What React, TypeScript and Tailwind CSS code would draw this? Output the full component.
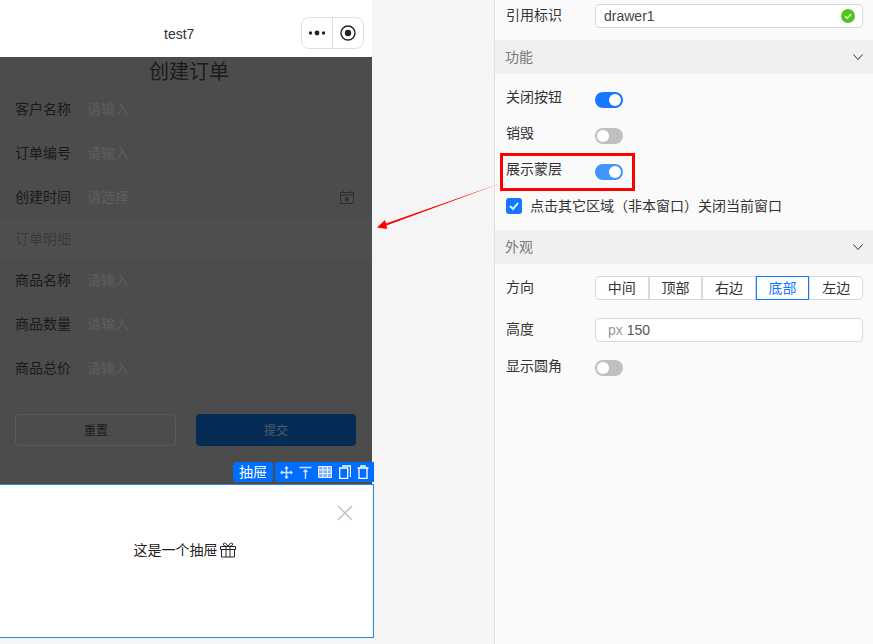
const cjk = { fontFamily: '"Liberation Sans", "Noto Sans CJK SC", sans-serif' };

function Toggle({ on, dim }: { on?: boolean; dim?: boolean }) {
  const bg = on ? (dim ? "bg-[#4096ff]" : "bg-[#1677ff]") : "bg-[#bfbfbf]";
  return (
    <span className={`flex h-4 w-7 items-center rounded-full p-0.5 ${bg} ${on ? "justify-end" : "justify-start"}`}>
      <span className="h-3 w-3 rounded-full bg-white" />
    </span>
  );
}

function Chevron() {
  return (
    <svg width="12" height="12" viewBox="0 0 12 12" fill="none" stroke="#333" strokeWidth="1">
      <path d="M1.5 3.5 6 8.5l4.5-5" />
    </svg>
  );
}

function FormRow({ label, hint, last, icon }: { label: string; hint: string; last?: boolean; icon?: boolean }) {
  return (
    <div className="px-[15px]">
      <div className={`flex h-11 items-center justify-between ${last ? "" : "border-b border-[#494949]"}`}>
        <div className="flex items-center text-sm">
          <span className="w-[72px] text-[#1a1a1a]">{label}</span>
          <span className="text-[#5e5e5e]">{hint}</span>
        </div>
        {icon && (
          <svg className="mr-[3px]" width="14" height="14" viewBox="0 0 14 14" fill="none" stroke="#2f2f2f" strokeWidth="1">
            <path d="M.5 2.500h13v11H.5zM.5 5h13M3.500 .5v2M10.500 .5v2" />
            <rect x="5" y="7.500" width="3.500" height="3.500" fill="#2f2f2f" stroke="none" />
          </svg>
        )}
      </div>
    </div>
  );
}

function PanelRow({ label, children, h, lift }: { label: string; children: React.ReactNode; h: string; lift: string }) {
  return (
    <div className={`flex items-center pl-[11px] ${h}`}>
      <span className={`w-[89px] text-sm text-[#333] ${lift}`}>{label}</span>
      {children}
    </div>
  );
}

function SectionHead({ title }: { title: string }) {
  return (
    <div className="flex h-[34px] items-center justify-between bg-[#f0f0f0] pl-2.5 pr-[9px]">
      <span className="text-sm text-[#777]">{title}</span>
      <Chevron />
    </div>
  );
}

function Seg({ text, active }: { text: string; active?: boolean }) {
  return (
    <span
      className={`flex h-6 flex-1 items-center justify-center border bg-white text-sm first:rounded-l last:rounded-r ${
        active ? "border-[#1677ff] text-[#1677ff]" : "border-[#d9d9d9] text-[#333]"
      }`}
    >
      {text}
    </span>
  );
}

function Phone() {
  return (
    <div className="flex h-[644px] w-[372px] shrink-0 flex-col bg-[#f5f5f5]">
      <div className="flex h-[57px] items-center bg-white">
        <span className="flex-1 pl-[164px] pt-[11px] text-sm text-[#333]">test7</span>
        <div className="mr-2 mt-2 flex h-8 w-[63px] items-center rounded-lg border border-[#e0e0e0]">
          <span className="flex h-full w-[31px] items-center justify-center border-r border-[#e0e0e0]">
            <svg width="18" height="6" viewBox="0 0 18 6" fill="#222">
              <circle cx="2.500" cy="3" r="1.700" />
              <circle cx="9" cy="3" r="2.400" />
              <circle cx="15.500" cy="3" r="1.700" />
            </svg>
          </span>
          <span className="flex flex-1 items-center justify-center">
            <svg width="16" height="16" viewBox="0 0 16 16">
              <circle cx="8" cy="8" r="7" fill="none" stroke="#222" strokeWidth="1.400" />
              <circle cx="8" cy="8" r="3.200" fill="#222" />
            </svg>
          </span>
        </div>
      </div>
      <div className="h-[427px] bg-[#4c4c4c]">
        <div className="flex h-[30px] items-center justify-center pl-1.5 text-xl text-[#1a1a1a]">创建订单</div>
        <FormRow label="客户名称" hint="请输入" />
        <FormRow label="订单编号" hint="请输入" />
        <FormRow label="创建时间" hint="请选择" icon last />
        <div className="flex h-[39px] items-center bg-[#4f4f4f] px-[15px] text-sm text-[#3a3a3a]">订单明细</div>
        <FormRow label="商品名称" hint="请输入" />
        <FormRow label="商品数量" hint="请输入" />
        <FormRow label="商品总价" hint="请输入" last />
        <div className="mt-6 flex gap-5 px-[15px]">
          <span className="flex h-8 w-[161px] items-center justify-center rounded border border-[#5a5a5a] pl-px pt-0.5 text-xs text-[#1a1a1a]">重置</span>
          <span className="flex h-8 w-40 items-center justify-center rounded bg-[#052c55] pt-0.5 text-xs text-[#4c5c6c]">提交</span>
        </div>
      </div>
      <div className="h-[154px] bg-white">
        <div className="flex justify-end pr-[18px] pt-5">
          <svg width="18" height="18" viewBox="0 0 18 18" stroke="#c4c4c4" strokeWidth="1.600">
            <path d="M2 2l14 14M16 2 2 16" />
          </svg>
        </div>
        <div className="mt-[18px] flex items-center justify-center gap-0.5 pr-[3px] text-sm text-[#222]">
          这是一个抽屉
          <svg width="16" height="16" viewBox="0 0 16 16" fill="none" stroke="#222" strokeWidth="1">
            <path d="M.5 4.500h15v3H.5zM1.500 7.500v7.500h13V7.500M6 4.500V15M10 4.500V15M8 4.500C6.500 .5 2.500 .2 3.500 3c.3 1 2.500 1.500 4.500 1.500s4.200-.5 4.500-1.500c1-2.800-3-2.500-4.500 1.500z" />
          </svg>
        </div>
      </div>
    </div>
  );
}

function Panel() {
  return (
    <div className="h-[644px] flex-1 border-l border-[#e0e0e0] bg-[#fafafa]">
      <PanelRow label="引用标识" h="h-10 pb-2" lift="-translate-y-px">
        <div className="flex h-6 w-[268px] items-center justify-between rounded border border-[#d9d9d9] bg-white pl-2 pr-[7px] text-sm text-[#444]">
          drawer1
          <svg width="14" height="14" viewBox="0 0 14 14">
            <circle cx="7" cy="7" r="7" fill="#52c41a" />
            <path d="M4 7.200 6.200 9.300 10 5.200" fill="none" stroke="#fff" strokeWidth="1.400" />
          </svg>
        </div>
      </PanelRow>
      <SectionHead title="功能" />
      <div className="pt-2">
        <PanelRow label="关闭按钮" h="h-9" lift="-translate-y-[3px]"><Toggle on /></PanelRow>
        <PanelRow label="销毁" h="h-9" lift="-translate-y-[3px]"><Toggle /></PanelRow>
        <PanelRow label="展示蒙层" h="h-9" lift="-translate-y-[3px]"><Toggle on dim /></PanelRow>
        <div className="flex h-[34px] -translate-y-px items-center gap-2 pl-[11px] text-sm text-[#333]">
          <span className="flex h-4 w-4 items-center justify-center rounded-[3px] bg-[#1677ff]">
            <svg width="12" height="12" viewBox="0 0 12 12" fill="none" stroke="#fff" strokeWidth="1.800">
              <path d="M2 6.200 5 9l5-6" />
            </svg>
          </span>
          点击其它区域（非本窗口）关闭当前窗口
        </div>
      </div>
      <div className="mt-1.5">
        <SectionHead title="外观" />
      </div>
      <div className="pt-3">
        <PanelRow label="方向" h="h-6" lift="-translate-y-px">
          <div className="flex w-[268px]">
            <Seg text="中间" />
            <Seg text="顶部" />
            <Seg text="右边" />
            <Seg text="底部" active />
            <Seg text="左边" />
          </div>
        </PanelRow>
        <div className="mt-[18px]">
          <PanelRow label="高度" h="h-6" lift="-translate-y-px">
            <div className="flex h-6 w-[268px] items-center rounded border border-[#d9d9d9] bg-white pl-3 text-sm text-[#555]">
              <span className="mr-1 text-[#999]">px</span>150
            </div>
          </PanelRow>
        </div>
        <div className="mt-2">
          <PanelRow label="显示圆角" h="h-9" lift="-translate-y-0.5"><Toggle /></PanelRow>
        </div>
      </div>
    </div>
  );
}

export default function App() {
  return (
    <div className="relative flex h-[644px] w-[873px] overflow-hidden bg-[#f5f5f5]" style={cjk}>
      <Phone />
      <div className="w-[122px] shrink-0" />
      <Panel />

      {/* selection toolbar over the drawer */}
      <div className="absolute left-[233px] top-[462px] flex h-5 items-center gap-0.5">
        <span className="flex h-5 w-10 items-center justify-center rounded bg-[#006dff] text-sm text-white">抽屉</span>
        <span className="flex h-5 w-[99px] items-center justify-around bg-[#006dff] px-0.5">
          <svg width="13" height="13" viewBox="0 0 13 13" fill="none" stroke="#cfe2ff" strokeWidth="1.400">
            <path d="M6.500 1v11M1 6.500h11M5 2.500 6.500 1 8 2.500M5 10.500 6.500 12 8 10.500M2.500 5 1 6.500 2.500 8M10.500 5 12 6.500 10.500 8" />
          </svg>
          <svg width="13" height="13" viewBox="0 0 13 13" fill="none" stroke="#cfe2ff" strokeWidth="1.400">
            <path d="M.5 1.500h12M6.500 4v9M4.500 6l2-2 2 2" />
          </svg>
          <svg width="14" height="12" viewBox="0 0 14 12" fill="#7fb5ff" stroke="#e6f0ff" strokeWidth="1">
            <path d="M.5 .5h13v11H.5zM.5 4h13M.5 7.500h13M5 .5v11M9.500 .5v11" />
          </svg>
          <svg width="12" height="14" viewBox="0 0 12 14" fill="none" stroke="#fff" strokeWidth="1.300">
            <path d="M3 1h8.500v11M.7 3h8v10.400h-8z" />
          </svg>
          <svg width="12" height="14" viewBox="0 0 12 14" fill="none" stroke="#fff" strokeWidth="1.300">
            <path d="M.5 3h11M4 3V1h4v2M2 3v10.400h8V3" />
          </svg>
        </span>
      </div>

      {/* drawer selection outline */}
      <div className="absolute left-0 top-[484px] h-[154px] w-[374px] border border-l-0 border-[#2b84e8]" />

      {/* red callout */}
      <div className="absolute left-[500px] top-[153px] h-[38px] w-[135px] border-[3px] border-[#f00]" />
      <svg className="absolute left-[372px] top-[180px]" width="130" height="55" viewBox="0 0 130 55">
        <path d="M128 3.500 14 43.500 13 40 5 47.500 15 49 14.500 45.500z" fill="#f00" />
      </svg>
    </div>
  );
}
